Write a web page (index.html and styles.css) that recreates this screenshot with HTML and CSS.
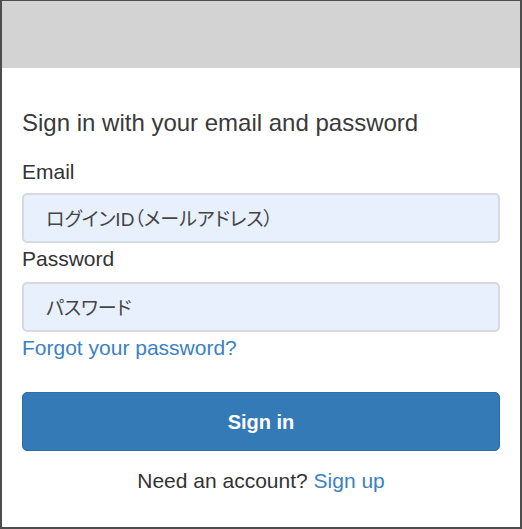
FILE: index.html
```html
<!DOCTYPE html>
<html lang="ja">
<head>
  <meta charset="UTF-8" />
  <meta name="viewport" content="width=device-width, initial-scale=1.0" />
  <title>Sign in</title>
  <link rel="stylesheet" href="styles.css">
</head>
<body>

  <div class="frame">
    <header class="banner"></header>

    <form class="signin-form">
      <h1 class="form-title">Sign in with your email and password</h1>

      <label class="field-label" for="email">Email</label>
      <input class="field-input email-input" id="email" type="text" placeholder="ログインID（メールアドレス）">

      <label class="field-label password-label" for="password">Password</label>
      <input class="field-input password-input" id="password" type="password" placeholder="パスワード">

      <a class="forgot-link" href="#">Forgot your password?</a>

      <button class="signin-button" type="button">Sign in</button>

      <p class="signup-line">Need an account? <a href="#">Sign up</a></p>
    </form>
  </div>

</body>
</html>
```

FILE: styles.css
```css
body {
  margin: 0;
  font-family: 'Liberation Sans', Arial, sans-serif;
  color: #333;
  background-color: #fff;
}

.frame {
  height: 529px;
  box-sizing: border-box;
  border: 2px solid #4d4d4d;
  border-top-width: 1px;
  overflow: hidden;
}

.banner {
  height: 67px;
  background-color: #d3d3d3;
}

.signin-form {
  display: flex;
  flex-direction: column;
  padding: 41px 20px 0;
}

.form-title {
  margin: 0;
  font-size: 24px;
  line-height: 28px;
  font-weight: normal;
  color: #3a3a3a;
}

.field-label {
  font-size: 21px;
  line-height: 24px;
  margin-top: 23px;
}
.password-label {
  margin-top: 4px;
}

.field-input {
  height: 50px;
  box-sizing: border-box;
  margin-top: 9px;
  padding: 4px 22px 0;
  font-size: 19px;
  font-family: 'Liberation Sans', 'Noto Sans CJK JP', sans-serif;
  font-feature-settings: "palt";
  background-color: #e8f0fe;
  border: 2px solid #d6d9de;
  border-radius: 5px;
  outline: none;
}
.password-input {
  margin-top: 11px;
}
.field-input::placeholder {
  color: #444;
  opacity: 1;
}

.forgot-link {
  align-self: flex-start;
  margin-top: 4px;
  font-size: 21px;
  line-height: 24px;
  color: #3a82c4;
  text-decoration: none;
}

.signin-button {
  height: 59px;
  margin-top: 32px;
  padding-top: 2px;
  font-family: 'Liberation Sans', Arial, sans-serif;
  font-size: 20px;
  font-weight: bold;
  color: #fff;
  background-color: #337ab7;
  border: 1px solid #2e6da4;
  border-radius: 5px;
}

.signup-line {
  margin: 18px 0 0;
  text-align: center;
  font-size: 21px;
  line-height: 24px;
}
.signup-line a {
  color: #3a82c4;
  text-decoration: none;
}
```
